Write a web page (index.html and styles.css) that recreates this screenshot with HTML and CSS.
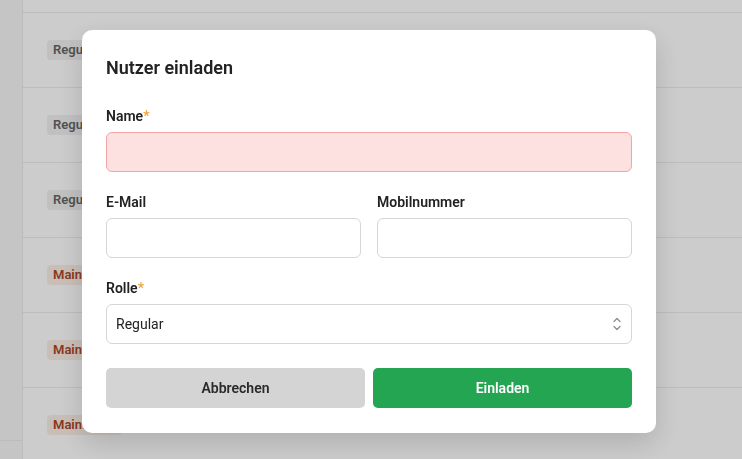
FILE: index.html
```html
<!DOCTYPE html>
<html lang="de">
<head>
  <meta charset="UTF-8">
  <meta name="viewport" content="width=device-width, initial-scale=1.0">
  <title>Nutzer</title>
  <link rel="stylesheet" href="styles.css">
</head>
<body>
  <div class="page">
    <aside class="side">
      <div class="side-foot"></div>
    </aside>

    <!-- user list behind the dialog -->
    <main class="list">
      <div class="row row-top"></div>
      <div class="row"><span class="badge">Regular</span></div>
      <div class="row"><span class="badge">Regular</span></div>
      <div class="row"><span class="badge">Regular</span></div>
      <div class="row"><span class="badge badge-main">Maintainer</span></div>
      <div class="row"><span class="badge badge-main">Maintainer</span></div>
      <div class="row"><span class="badge badge-main">Maintainer</span></div>
    </main>
  </div>

  <!-- Invite dialog -->
  <div class="overlay">
    <div class="modal">
      <h2>Nutzer einladen</h2>
      <form class="form">
        <div class="field">
          <label for="name">Name<span class="req">*</span></label>
          <input type="text" id="name" class="input input-error">
        </div>
        <div class="field-row">
          <div class="field">
            <label for="email">E-Mail</label>
            <input type="email" id="email" class="input">
          </div>
          <div class="field">
            <label for="phone">Mobilnummer</label>
            <input type="tel" id="phone" class="input">
          </div>
        </div>
        <div class="field">
          <label for="role">Rolle<span class="req">*</span></label>
          <div class="select">
            <span>Regular</span>
            <svg width="8" height="14" viewBox="0 0 8 14" fill="none" stroke="#8a8a8a" stroke-width="1.2" stroke-linecap="round" stroke-linejoin="round">
              <path d="M1 4.5 L4 1.5 L7 4.5"/>
              <path d="M1 9.5 L4 12.5 L7 9.5"/>
            </svg>
          </div>
        </div>
        <div class="actions">
          <button type="button" class="btn btn-cancel">Abbrechen</button>
          <button type="button" class="btn btn-primary">Einladen</button>
        </div>
      </form>
    </div>
  </div>
</body>
</html>
```

FILE: styles.css
```css
* {
  box-sizing: border-box;
}
body {
  margin: 0;
  font-family: 'Roboto', 'Noto Sans', sans-serif;
  color: #222;
  background: #fff;
  overflow: hidden;
}
.page {
  display: flex;
  height: 100vh;
}
.side {
  width: 23px;
  background: #f7f7f7;
  border-right: 1px solid #ececec;
  display: flex;
  flex-direction: column;
  justify-content: flex-end;
}
.side-foot {
  height: 19px;
  border-top: 1px solid #ececec;
}
.list {
  flex: 1;
}
.row {
  height: 75px;
  border-bottom: 1px solid #ececec;
  display: flex;
  align-items: center;
  padding-left: 24px;
}
.row-top {
  height: 13px;
}
.badge {
  height: 20px;
  line-height: 20px;
  padding: 0 6px;
  border-radius: 4px;
  font-size: 13px;
  font-weight: 600;
  background: #f1f1f1;
  color: #666;
}
.badge-main {
  background: #fbeee6;
  color: #ac4725;
}

/* dialog */
.overlay {
  position: fixed;
  inset: 0;
  background: rgba(0, 0, 0, 0.2);
  display: flex;
  align-items: center;
  justify-content: center;
  padding: 4px 4px 0 0;
}
.modal {
  width: 574px;
  background: #fff;
  border-radius: 10px;
  padding: 24px 24px 25px;
  box-shadow: 0 10px 28px rgba(0, 0, 0, 0.15);
}
.modal h2 {
  margin: 0 0 24px;
  font-size: 18px;
  line-height: 28px;
  font-weight: 600;
  color: #222;
}
.form {
  display: flex;
  flex-direction: column;
  gap: 20px;
}
.field-row {
  display: flex;
  gap: 16px;
}
.field-row .field {
  flex: 1;
}
.field label {
  display: block;
  font-size: 14px;
  line-height: 20px;
  font-weight: 600;
  margin-bottom: 6px;
  color: #222;
}
.req {
  color: #f0a43a;
}
.input, .select {
  display: block;
  width: 100%;
  height: 40px;
  border: 1px solid #d6d6d6;
  border-radius: 6px;
  background: #fff;
  font: inherit;
  font-size: 14px;
}
.input-error {
  background: #fde1e1;
  border-color: #f3a5a5;
}
.select {
  display: flex;
  align-items: center;
  justify-content: space-between;
  padding: 0 10px 0 9px;
  color: #222;
}
.actions {
  display: flex;
  gap: 8px;
  margin-top: 4px;
}
.btn {
  flex: 1;
  height: 40px;
  border: none;
  border-radius: 5px;
  font-family: inherit;
  font-size: 14px;
  font-weight: 600;
  cursor: pointer;
}
.btn-cancel {
  background: #d4d4d4;
  color: #2a2a2a;
}
.btn-primary {
  background: #24a552;
  color: #fff;
}
```
